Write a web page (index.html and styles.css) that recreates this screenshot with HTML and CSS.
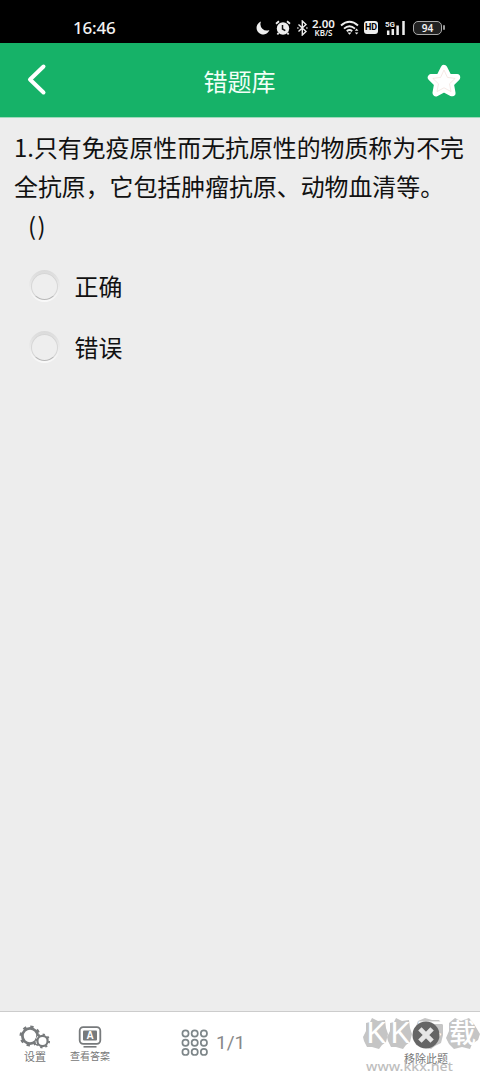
FILE: index.html
```html
<!DOCTYPE html>
<html lang="zh-CN">
<head>
<meta charset="utf-8">
<title>错题库</title>
<link rel="stylesheet" href="styles.css">
</head>
<body>
<div class="app">
  <div class="status">
    <span class="clock">16:46</span>
    <div class="indicators">
      <svg class="moon" width="14" height="14" viewBox="0 0 14 14"><path d="M5 .6A6.6 6.6 0 1 0 13.4 9 6.4 6.4 0 0 1 5 .6Z" fill="#eee"/></svg>
      <svg class="alarm" width="16" height="16" viewBox="0 0 16 16"><circle cx="8" cy="8.5" r="6.2" fill="#eee"/><path d="M1 3.8 4 1.2M15 3.8 12 1.2M3.5 13 2.4 14.5M12.5 13l1.1 1.5" stroke="#eee" stroke-width="1.8"/><path d="M7.5 5v4l2.8 1.6" fill="none" stroke="#111" stroke-width="1.5"/></svg>
      <svg class="bluetooth" width="11" height="16" viewBox="0 0 11 16"><path d="m1.5 4.5 7.5 7L5.3 15V1L9 4.5l-7.5 7M.3 8h1.2M9.3 8h1.2" fill="none" stroke="#eee" stroke-width="1.4"/></svg>
      <div class="speed"><span>2.00</span><small>KB/S</small></div>
      <svg class="wifi" width="20" height="16" viewBox="0 0 20 16"><path d="M1 5.5Q9.5-2 18 5.5M4 8.6q5.5-4.8 11 0M6.8 11.3q2.7-2.4 5.4 0" fill="none" stroke="#eee" stroke-width="1.9"/><path d="m7.5 12.5 2 2.3 2-2.3ZM14.8 10.8l1.8-2.2 1.8 2.2ZM14.8 12.4l1.8 2.2 1.8-2.2Z" fill="#eee"/></svg>
      <span class="hd">HD</span>
      <svg class="signal" width="21" height="16" viewBox="0 0 21 16"><text x="0" y="7" class="net">5G</text><path d="M3.2 10.5V15M7.8 9v6M12.6 5.5V15M18.5 1v14" stroke="#eee" stroke-width="2.5"/></svg>
      <div class="battery">94</div>
    </div>
  </div>

  <header class="header">
    <svg class="back" width="22" height="34" viewBox="0 0 22 34"><path d="M16.5 3.5 3 16.5l13.5 13" fill="none" stroke="#fff" stroke-width="4" stroke-linecap="round" stroke-linejoin="round"/></svg>
    <h1 class="title">错题库</h1>
    <svg class="star" width="34" height="34" viewBox="0 0 34 34"><path d="m17 4.5 3.9 7.8 8.8 1.2-6.3 6.3 1.6 9-8-4.2-8 4.2 1.6-9-6.3-6.3 8.8-1.2Z" fill="#fff" stroke="#fff" stroke-width="7" stroke-linejoin="round"/><path d="m17 6 3.4 7.4 7.8 1-5.7 5.4 1.5 7.8-7-3.8-7 3.8 1.5-7.8-5.7-5.4 7.8-1Z" fill="none" stroke="#f1dfda" stroke-width=".7"/></svg>
  </header>

  <main class="content">
    <p class="question">1.只有免疫原性而无抗原性的物质称为不完<br>全抗原，它包括肿瘤抗原、动物血清等。<br><span class="blank">()</span></p>
    <div class="options">
      <div class="option"><i class="radio"></i><span>正确</span></div>
      <div class="option"><i class="radio"></i><span>错误</span></div>
    </div>
  </main>

  <footer class="toolbar">
    <div class="tool settings">
      <svg width="32" height="24" viewBox="0 0 32 24" fill="none" stroke="#777a7c">
        <circle cx="11" cy="11" r="7.6" stroke-width="2.8"/><circle cx="11" cy="11" r="9.3" stroke-width="2.4" stroke-dasharray="3.3 4"/>
        <circle cx="23.5" cy="16" r="7" fill="#fff" stroke="none"/><circle cx="23.5" cy="16" r="5.1" stroke-width="2.2"/><circle cx="23.5" cy="16" r="6.6" stroke-width="1.9" stroke-dasharray="2.2 2.98"/>
      </svg>
      <span>设置</span>
    </div>
    <div class="tool answer">
      <svg width="24" height="22" viewBox="0 0 24 22"><rect x="1.7" y="1.2" width="20.6" height="16.6" rx="3.5" fill="#fff" stroke="#777a7c" stroke-width="1.8"/><rect x="5" y="4.5" width="14" height="10" rx="1" fill="#777a7c"/><text x="12" y="13" class="letter">A</text><path d="M5.5 20.8h13" stroke="#777a7c" stroke-width="1.6"/></svg>
      <span>查看答案</span>
    </div>
    <div class="pager">
      <svg width="28" height="28" viewBox="0 0 28 28" fill="none" stroke="#7d8689" stroke-width="1.7"><circle cx="4.5" cy="4.5" r="3.1"/><circle cx="13.7" cy="4.5" r="3.1"/><circle cx="22.9" cy="4.5" r="3.1"/><circle cx="4.5" cy="13.7" r="3.1"/><circle cx="13.7" cy="13.7" r="3.1"/><circle cx="22.9" cy="13.7" r="3.1"/><circle cx="4.5" cy="22.9" r="3.1"/><circle cx="13.7" cy="22.9" r="3.1"/><circle cx="22.9" cy="22.9" r="3.1"/></svg>
      <span>1/1</span>
    </div>
    <div class="tool remove">
      <svg width="28" height="28" viewBox="0 0 28 28"><circle cx="14" cy="14" r="13.5" fill="#656565"/><path d="m9.6 9.6 8.8 8.8m0-8.8-8.8 8.8" stroke="#e6e6e6" stroke-width="4.8" stroke-linecap="square"/></svg>
      <span>移除此题</span>
    </div>
    <svg class="watermark" width="120" height="58" viewBox="0 0 120 58">
      <g fill="#c5c5c5"><path d="m3 8 4-1 2-4 6 3 7-1 1 8 2 6-2 8-4 3-3 4-7-2-5 0-3-6-1-4 3-6Z"/><path d="m27 8 4-1 2-4 6 3 7-1 1 8 2 6-2 8-4 3-3 4-7-2-5 0-3-6-1-4 3-6Z"/><path d="m55 6 7-3 7 2 7 0 4 5 0 10-2 8-6 3-4 3-8-2-7-2-2-8 1-8Z"/><path d="m86 8 6-5 6 3 8-3 5 6 6 10-2 6-6 4-2 5-8-2-8 2-5-5-3-6 3-7Z"/></g>
      <text transform="translate(3 28) scale(1.1 1)" class="mark">K</text><text transform="translate(27 28) scale(1.1 1)" class="mark">K</text><text x="54" y="28" class="mark han">下</text><text x="86" y="28" class="mark han">载</text>
      <text x="3" y="55.5" class="url" textLength="87" lengthAdjust="spacingAndGlyphs">www.kkx.net</text>
    </svg>
  </footer>
</div>
</body>
</html>
```

FILE: styles.css
```css
* { box-sizing: border-box; }
body { margin: 0; font-family: "Noto Sans CJK SC", sans-serif; }
.app { width: 480px; height: 1072px; display: flex; flex-direction: column; background: #ededed; overflow: hidden; }

.status { height: 43px; flex: none; background: #000; color: #f2f2f2; display: flex; justify-content: space-between; padding: 12px 38px 0 73px; }
.clock { font: 500 17px/32px "Noto Sans", sans-serif; letter-spacing: -.2px; }
.indicators { display: flex; align-items: center; height: 31px; }
.alarm { margin-left: 5px; }
.bluetooth { margin-left: 6px; }
.speed { width: 25px; margin: 0 0 0 3px; display: flex; flex-direction: column; align-items: center; font: 600 11.5px/10px "Noto Sans", sans-serif; }
.speed small { font-size: 8px; line-height: 8px; }
.wifi { margin-left: 4px; }
.hd { width: 14px; height: 13px; margin-left: 4px; border-radius: 3px; background: #eee; color: #000; font: 700 9px/13px Roboto, sans-serif; text-align: center; }
.signal { margin-left: 7px; }
.net { font: 700 8px Roboto, sans-serif; fill: #eee; }
.battery { width: 29px; height: 14px; margin-left: 7px; border: 1.5px solid #aaa; border-radius: 5px; background: #222; font: 600 10px/12px "Noto Sans", sans-serif; text-align: center; position: relative; }
.battery::after { content: ""; position: absolute; right: -4px; top: 3px; width: 2px; height: 5px; background: #999; border-radius: 1px; }

.header { height: 75px; flex: none; display: grid; grid-template-columns: 30px 1fr 34px; align-items: center; padding: 0 20px 0 27px; background: #16b268; border-bottom: 1px solid #9fd9bb; }
.back { margin-top: -1px; }
.title { margin: 1px 4px 0 0; color: #f2fff7; font-size: 24px; line-height: 36px; font-weight: 400; text-align: center; }
.star { margin: 2px 0 0 1px; }

.content { flex: 1; padding: 9px 14px; color: #111; font-size: 23.9px; }
.question { margin: 0; line-height: 39px; white-space: nowrap; }
.blank { display: inline-block; height: 39px; padding-left: 14px; line-height: 37px; letter-spacing: 1.5px; }
.options { margin-top: 11px; display: flex; flex-direction: column; }
.option { height: 61px; display: flex; align-items: center; gap: 15px; padding-left: 14.5px; }
.option span { margin-top: -2px; line-height: 36px; }
.radio { width: 31px; height: 32px; margin-top: -1px; border-radius: 50%; background: linear-gradient(#dadada, #fafafa); display: grid; place-items: center; }
.radio::before { content: ""; width: 25px; height: 25px; border-radius: 50%; background: #eee; border: 1px solid #d6d6d6; border-bottom-color: #b8b8b8; }

.toolbar { height: 61px; flex: none; position: relative; display: flex; align-items: flex-start; background: #fff; border-top: 1px solid #ccc; color: #777; }
.tool { display: flex; flex-direction: column; align-items: center; }
.tool span { font-size: 11px; line-height: 14px; white-space: nowrap; }
.settings { width: 32px; margin: 13px 0 0 19px; }
.settings span { margin-top: 0; }
.answer { width: 40px; margin: 14px 0 0 19px; }
.answer span { font-size: 10px; margin-top: 1px; }
.letter { font: 700 10px "Liberation Sans", sans-serif; fill: #fff; text-anchor: middle; }
.pager { display: flex; align-items: center; gap: 7px; margin: 17px 0 0 71px; height: 28px; }
.pager span { font: 400 19px/28px Roboto, sans-serif; color: #888; }
.remove { width: 46px; margin: 9px 31px 0 auto; position: relative; z-index: 2; }
.remove span { margin-top: 2px; color: #777; }
.watermark { position: absolute; right: -3px; top: 3px; z-index: 1; }
.mark { font: 400 29px "Noto Sans", sans-serif; fill: #fff; }
.han { font: 500 27px "Noto Sans CJK SC", sans-serif; }
.url { font: 500 12.5px "Noto Sans", sans-serif; fill: #bebebe; }
```
